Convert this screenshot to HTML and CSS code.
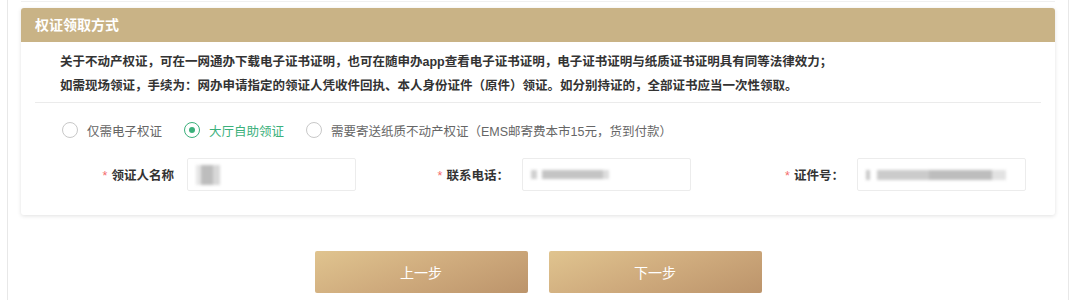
FILE: index.html
```html
<!DOCTYPE html>
<html lang="zh-CN">
<head>
  <meta charset="UTF-8">
  <meta name="viewport" content="width=device-width, initial-scale=1">
  <title>权证领取方式</title>
  <link rel="stylesheet" href="styles.css">
</head>
<body>

  <div class="page">
    <div class="prev-card"></div>

    <div class="card">
      <div class="card-header">权证领取方式</div>
      <div class="card-body">
        <div class="notice">
          <p>关于不动产权证，可在一网通办下载电子证书证明，也可在随申办app查看电子证书证明，电子证书证明与纸质证书证明具有同等法律效力；</p>
          <p>如需现场领证，手续为：网办申请指定的领证人凭收件回执、本人身份证件（原件）领证。如分别持证的，全部证书应当一次性领取。</p>
        </div>

        <div class="radio-group">
          <label class="radio">
            <span class="radio-dot"></span>
            <span class="radio-text">仅需电子权证</span>
          </label>
          <label class="radio is-checked">
            <span class="radio-dot"></span>
            <span class="radio-text">大厅自助领证</span>
          </label>
          <label class="radio">
            <span class="radio-dot"></span>
            <span class="radio-text">需要寄送纸质不动产权证（EMS邮寄费本市15元，货到付款）</span>
          </label>
        </div>

        <div class="form-row">
          <div class="form-item">
            <div class="form-label"><span class="req">*</span>领证人名称</div>
            <div class="form-input">
              <span class="mask mask-name"></span>
            </div>
          </div>
          <div class="form-item">
            <div class="form-label"><span class="req">*</span>联系电话：</div>
            <div class="form-input">
              <span class="mask mask-phone"></span>
            </div>
          </div>
          <div class="form-item">
            <div class="form-label"><span class="req">*</span>证件号：</div>
            <div class="form-input">
              <span class="mask mask-id"></span>
            </div>
          </div>
        </div>
      </div>
    </div>

    <div class="actions">
      <button type="button" class="btn-step">上一步</button>
      <button type="button" class="btn-step">下一步</button>
    </div>
  </div>

</body>
</html>
```

FILE: styles.css
```css
body {
  margin: 0;
  padding: 0;
  background: #fff;
  font-family: "Liberation Sans", "Noto Sans CJK SC", sans-serif;
  font-size: 12.5px;
  color: #333;
}

.page {
  margin: 0 11px 0 7px;
  min-height: 300px;
  padding: 0 13px;
  border-left: 1px solid #e8e8e8;
  border-right: 1px solid #e8e8e8;
  box-sizing: border-box;
}

.prev-card {
  height: 1px;
  border-bottom: 1px solid #f0f0f0;
  margin-bottom: 6px;
}

.card {
  background: #fff;
  border-radius: 3px;
  box-shadow: 0 1px 4px rgba(0, 0, 0, 0.12);
  overflow: hidden;
}

.card-header {
  height: 34px;
  line-height: 34px;
  padding-left: 14px;
  background: #c9b386;
  color: #fff;
  font-size: 14px;
  font-weight: bold;
}

.card-body {
  padding: 0 14px 24px;
}

.notice {
  padding: 8px 25px 4px;
  border-bottom: 1px solid #ebebeb;
}

.notice p {
  margin: 0;
  line-height: 24px;
  font-weight: bold;
  color: #333;
}

.radio-group {
  display: flex;
  align-items: center;
  gap: 22px;
  height: 28px;
  margin-top: 13px;
  padding-left: 27px;
}

.radio {
  display: flex;
  align-items: center;
  gap: 9px;
  color: #666;
  cursor: pointer;
}

.radio-dot {
  width: 14px;
  height: 14px;
  border: 1px solid #c8c8c8;
  border-radius: 50%;
  display: flex;
  align-items: center;
  justify-content: center;
}

.radio.is-checked {
  color: #3bb07b;
}

.radio.is-checked .radio-dot {
  border-color: #3bb07b;
}

.radio.is-checked .radio-dot::after {
  content: "";
  width: 6px;
  height: 6px;
  border-radius: 50%;
  background: #3bb07b;
}

.form-row {
  display: grid;
  grid-template-columns: repeat(3, 335px);
  margin-top: 14px;
  padding-left: 17px;
}

.form-item {
  display: flex;
  align-items: center;
}

.form-label {
  width: 135px;
  box-sizing: border-box;
  padding-right: 13px;
  text-align: right;
  font-weight: bold;
  color: #333;
}

.req {
  color: #f56c6c;
  margin-right: 4px;
  font-weight: normal;
}

.form-input {
  width: 169px;
  height: 33px;
  box-sizing: border-box;
  border: 1px solid #ececec;
  border-radius: 2px;
  display: flex;
  align-items: center;
  padding-left: 8px;
}

.mask {
  display: block;
  filter: blur(1.5px);
}

.mask-name {
  width: 24px;
  height: 20px;
  background: linear-gradient(90deg, #e6e6e6 0 20%, #bdbdbd 20% 70%, #d8d8d8 70%);
}

.mask-phone {
  width: 78px;
  height: 9px;
  background: linear-gradient(90deg, #d0d0d0 0 8%, #fff 8% 14%, #c4c4c4 14% 92%, #ddd 92%);
}

.mask-id {
  width: 140px;
  height: 10px;
  background: linear-gradient(90deg, #c8c8c8 0 3%, #fff 3% 8%, #cbcbcb 8% 45%, #bdbdbd 45% 90%, #e2e2e2 90%);
}

.actions {
  display: flex;
  justify-content: center;
  gap: 21px;
  margin-top: 36px;
}

.btn-step {
  width: 213px;
  height: 42px;
  border: none;
  border-radius: 2px;
  background: linear-gradient(160deg, #e0c48f 0%, #cfab7d 50%, #bc946b 100%);
  color: #fff;
  font-family: "Liberation Sans", "Noto Sans CJK SC", sans-serif;
  font-size: 14px;
  cursor: pointer;
}
```
